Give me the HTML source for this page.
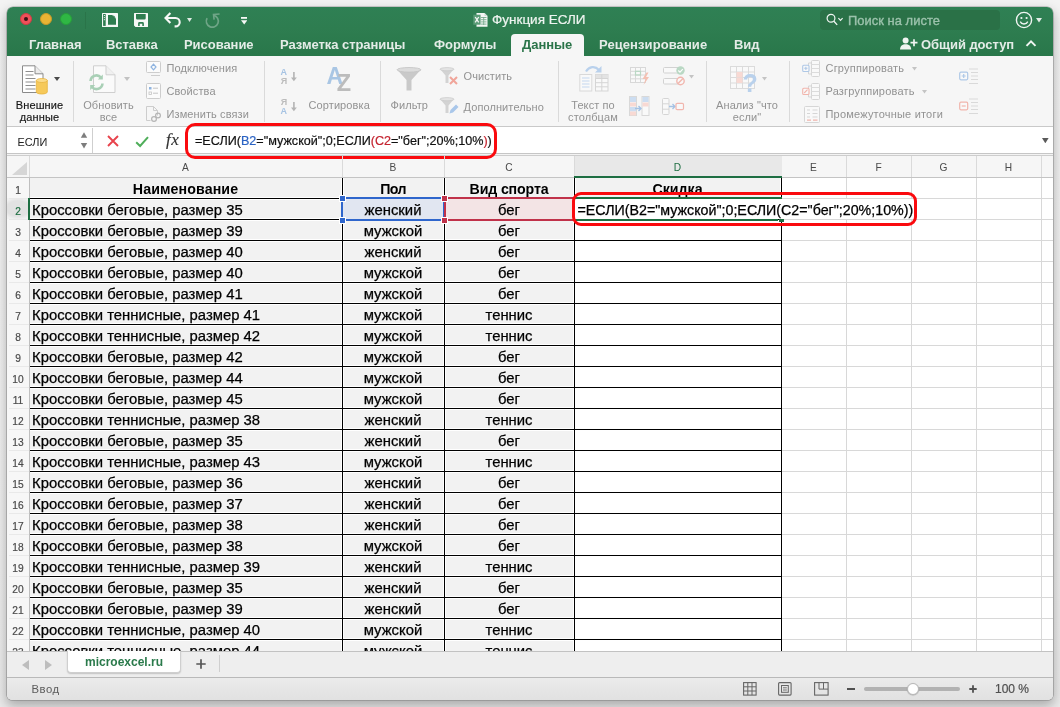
<!DOCTYPE html>
<html lang="ru"><head><meta charset="utf-8"><title>Функция ЕСЛИ</title>
<style>
*{box-sizing:border-box;margin:0;padding:0}
html,body{width:1060px;height:707px;overflow:hidden;background:linear-gradient(#f3f3f3,#f0f0f0 60%,#eaeaea);font-family:"Liberation Sans",sans-serif}
#win{position:absolute;left:7px;top:7px;width:1046px;height:693px;border-radius:6px 6px 5px 5px;background:#f1f1f1;box-shadow:0 5px 12px 1px rgba(0,0,0,.27),0 0 0 .6px rgba(0,0,0,.3);overflow:hidden}
#page{position:absolute;left:-7px;top:-7px;width:1060px;height:707px;will-change:transform}
#page div,#page svg,#page span.abs{position:absolute}
#green{left:7px;top:7px;width:1046px;height:49px;background:linear-gradient(#2f8054,#2e7d50 45%,#29774a)}
.tab{top:36.5px;height:16px;font-size:13px;font-weight:bold;color:#e4ece7;white-space:nowrap;line-height:16px;letter-spacing:-.05px}
#atab{left:511px;top:34px;width:73px;height:22px;background:#f6f6f6;border-radius:4px 4px 0 0}
#ribbon{left:7px;top:56px;width:1046px;height:71px;background:#f6f6f6;border-bottom:1px solid #c9c9c9}
.rl{font-size:11px;color:#929292;white-space:nowrap;line-height:13px;letter-spacing:.1px}
.rl.dk{color:#161616;-webkit-text-stroke:.15px #161616}
.rc{text-align:center}
.sep{width:1px;background:#dadada;top:60.5px;height:61px}
#fbar{left:7px;top:127px;width:1046px;height:27px;background:#fff;border-bottom:1px solid #c6c6c6}
#hdr{left:7px;top:154px;width:1046px;height:24px;background:#f6f6f6;border-top:1px solid #f3f3f3;border-bottom:1px solid #c4c4c4;box-shadow:inset 0 1px 0 #cdcdcd}
#sheet{left:7px;top:178px;width:1046px;height:473px;background:#fff}
.ch{top:160.5px;height:14px;font-size:10.2px;color:#4a4a4a;text-align:center;line-height:14px}
.rn{left:7px;width:22px;height:21px;font-size:10.2px;color:#4a4a4a;text-align:center;line-height:28px;-webkit-text-stroke:.2px #4a4a4a}
.rn.sel{color:#1e6e42;-webkit-text-stroke:.2px #1e6e42;background:radial-gradient(ellipse 16px 11px at 50% 50%,#e2e2e2 70%,#f1f1f1 100%)}
.c{height:21px;font-size:14.85px;line-height:24px;color:#000;white-space:nowrap;overflow:hidden;-webkit-text-stroke:.25px #000}
.c.h{font-weight:bold;text-align:center;font-size:14.2px;-webkit-text-stroke:0}
.c.a{padding-left:3px}
.c.m{text-align:center}
.fill{background:#f2f2f2}
.wv{background:#fff;width:3px;top:178px;height:473px}
.wh{background:#fff;height:3px;left:30px;width:752px}
.vl{background:#000;width:1px;top:178px;height:473px}
.hl{background:#000;height:1px;left:30px;width:752px}
.gv{background:#d8d8d8;width:1px;top:178px;height:473px}
.gh{background:#d8d8d8;height:1px;left:782px;width:271px}
  .rh{left:9px;width:20px;height:1px;background:#e9e9e9}
.cs{top:156px;width:1px;height:21px;background:#dadada}
.ch.sel{color:#1e6e42}
#tabsbar{left:7px;top:651px;width:1046px;height:26px;background:#eeeeee;border-top:1px solid #c2c2c2}
#status{left:7px;top:677px;width:1046px;height:23px;background:linear-gradient(#ebebeb,#e1e1e1);border-top:1px solid #b9b9b9}
</style></head><body>
<div id="win"><div id="page">
<div id="green"></div>
<div id="atab"></div>
<!-- title bar -->
<div style="left:20px;top:13px;width:12px;height:12px;border-radius:50%;background:#f0505a;border:.5px solid #d13c44"></div>
<div style="left:24px;top:17px;width:4px;height:4px;border-radius:50%;background:#3a1417"></div>
<div style="left:40px;top:13px;width:12px;height:12px;border-radius:50%;background:#e9b434;border:.5px solid #c99a28"></div>
<div style="left:60px;top:13px;width:12px;height:12px;border-radius:50%;background:#2fb744;border:.5px solid #27a03a"></div>
<div style="left:85px;top:12px;width:1px;height:17px;background:#2a7449"></div>
<svg style="left:102px;top:13px" width="16" height="14" viewBox="0 0 16 14"><rect x="0" y="0" width="16" height="14" rx=".6" fill="#f6f8f6"/><rect x="1.1" y="1" width="2.600" height="11.900" fill="#2f7d50"/><rect x="1.900" y="2" width="1" height="1" fill="#f6f8f6"/><rect x="1.900" y="4.100" width="1" height="1" fill="#f6f8f6"/><rect x="1.900" y="6.200" width="1" height="1" fill="#f6f8f6"/><path d="M6 2h4.200L14 5.800v6H6z" fill="#2f7d50"/><path d="M11.400 2.300l2.300 2.300h-2.300z" fill="#2f7d50"/></svg>
<svg style="left:134px;top:13px" width="14" height="14" viewBox="0 0 14 14"><path d="M.6 0h12.800a.6.600 0 0 1 .6.600v12.800a.6.600 0 0 1-.6.600H1.500L0 12.500V.6A.6.600 0 0 1 .6 0z" fill="#f6f8f6"/><path d="M2 1.100h9.700v4.200a1.200 1.200 0 0 1-1.200 1.200H3.200A1.200 1.200 0 0 1 2 5.300z" fill="#2f7d50"/><path d="M4.100 13v-2.600A1.400 1.400 0 0 1 5.500 9h3a1.400 1.400 0 0 1 1.400 1.400V13H8.300v-2.300H5.700V13z" fill="#2f7d50"/></svg>
<svg style="left:164px;top:12px" width="18" height="16" viewBox="0 0 18 16"><path d="M6.400 1L1.500 6l4.900 5" fill="none" stroke="#f6f8f6" stroke-width="2.100"/><path d="M1.800 6h9.700a4.200 4.200 0 0 1 0 8.400h-.9" fill="none" stroke="#f6f8f6" stroke-width="2.100"/></svg>
<svg style="left:187px;top:17.800px" width="5" height="4" viewBox="0 0 5 4"><path d="M0 0h5L2.500 3.900z" fill="#dfeae3"/></svg>
<svg style="left:204px;top:12px" width="17" height="17" viewBox="0 0 17 17"><path d="M3.100 6.200A6 6 0 1 0 9.850 3.400" fill="none" stroke="#6fa587" stroke-width="1.700"/><path d="M15.600 2L9.500 2.400l.6 5.300" fill="none" stroke="#6fa587" stroke-width="1.600"/></svg>
<svg style="left:240.800px;top:17px" width="6.400" height="7.600" viewBox="0 0 6.400 7.600"><rect x="0" y="0" width="6.400" height="1.800" fill="#f6f8f6"/><path d="M0 3.300h6.400L3.200 7.500z" fill="#f6f8f6"/></svg>
<!-- doc icon + title -->
<svg style="left:472.500px;top:13px" width="15" height="14" viewBox="0 0 15 14"><path d="M3.500 0h8l3 3v10.800h-11z" fill="#f3f6f4"/><path d="M11.500 0v3h3" fill="#cfdcd4"/><path d="M8 4.500h5.500M8 6.700h5.500M8 8.900h5.500M8 11.100h5.500M10.700 4v8" stroke="#79ad8f" stroke-width=".9"/><rect x=".3" y="1.700" width="7.300" height="10" fill="#5b9c77"/><path d="M2.200 4l3.500 5.400M5.700 4L2.200 9.400" stroke="#f3f6f4" stroke-width="1.300"/></svg>
<div style="left:492px;top:11px;height:18px;line-height:18px;font-size:13.5px;color:#eef4f0;white-space:nowrap;letter-spacing:0;-webkit-text-stroke:.2px #eef4f0">Функция ЕСЛИ</div>
<!-- search -->
<div style="left:820px;top:10px;width:180px;height:20px;border-radius:4px;background:#2a7147"></div>
<svg style="left:826px;top:13px" width="20" height="14" viewBox="0 0 20 14"><circle cx="5" cy="5.3" r="3.9" fill="none" stroke="#f0f5f2" stroke-width="1.200"/><path d="M7.900 8.300l3.300 3.600" stroke="#f0f5f2" stroke-width="1.400"/><path d="M12.4 5.2l2.1 2.1 2.1-2.1" fill="none" stroke="#f0f5f2" stroke-width="1.2"/></svg>
<div style="left:848px;top:12px;height:18px;line-height:18px;font-size:12.900px;color:#9cc2ac;white-space:nowrap;letter-spacing:.05px;-webkit-text-stroke:.35px #9cc2ac">Поиск на листе</div>
<svg style="left:1015px;top:11px" width="18" height="18" viewBox="0 0 18 18"><circle cx="9" cy="9" r="7.6" fill="none" stroke="#f0f5f2" stroke-width="1.4"/><circle cx="6.4" cy="7" r="1.1" fill="#f0f5f2"/><circle cx="11.6" cy="7" r="1.1" fill="#f0f5f2"/><path d="M5.2 10.6a4.2 4.2 0 0 0 7.6 0" fill="none" stroke="#f0f5f2" stroke-width="1.3"/></svg>
<svg style="left:1035.500px;top:17.500px" width="6" height="5" viewBox="0 0 6 5"><path d="M0 0h6L3 4.600z" fill="#e3ede7"/></svg>
<!-- tabs -->
<div class="tab" style="left:29px">Главная</div>
<div class="tab" style="left:106px">Вставка</div>
<div class="tab" style="left:184px">Рисование</div>
<div class="tab" style="left:280px">Разметка страницы</div>
<div class="tab" style="left:434px">Формулы</div>
<div class="tab" style="left:522px;color:#2a7449">Данные</div>
<div class="tab" style="left:599px;letter-spacing:.08px">Рецензирование</div>
<div class="tab" style="left:734px">Вид</div>
<svg style="left:900px;top:37px" width="18" height="14" viewBox="0 0 18 14"><circle cx="5.6" cy="3.6" r="3" fill="#f0f5f2"/><path d="M0 12.6c0-3.6 2.4-5.4 5.6-5.4s5.6 1.8 5.6 5.4z" fill="#f0f5f2"/><path d="M14 2.2v7M10.5 5.7h7" stroke="#f0f5f2" stroke-width="1.7"/></svg>
<div class="tab" style="left:921px">Общий доступ</div>
<svg style="left:1025px;top:39px" width="12" height="8" viewBox="0 0 12 8"><path d="M1.500 6.900l4.500-4.500 4.500 4.500" fill="none" stroke="#f0f5f2" stroke-width="2"/></svg>
<div id="ribbon"></div>
<!-- group 1: external data -->
<svg style="left:21px;top:65px" width="28" height="30" viewBox="0 0 28 30"><path d="M1.5.8h12.5l8 8v18.7H1.5z" fill="#fff" stroke="#8a8a8a" stroke-width="1"/><path d="M14 .8v8h8" fill="#ececec" stroke="#8a8a8a" stroke-width="1"/><path d="M4.5 6.5h8M4.5 10h8M4.5 13.5h10M4.5 17h10M4.5 20.500h10M4.500 24h10" stroke="#8f8f8f" stroke-width="1"/><path d="M15.300 15.500v11.500a5.500 2 0 0 0 11 0V15.500z" fill="#f6c95a" stroke="#e7b43f" stroke-width=".8"/><ellipse cx="20.800" cy="15.500" rx="5.500" ry="2" fill="#fbdc8c" stroke="#e7b43f" stroke-width=".8"/></svg>
<svg style="left:53.500px;top:77px" width="6" height="4" viewBox="0 0 6 4"><path d="M0 0h6L3 4z" fill="#4a4a4a"/></svg>
<div class="rl dk rc" style="left:10px;top:99px;width:59px">Внешние</div>
<div class="rl dk rc" style="left:10px;top:111px;width:59px">данные</div>
<div class="sep" style="left:73px"></div>
<!-- refresh all -->
<svg style="left:88px;top:65px" width="29" height="30" viewBox="0 0 29 30"><path d="M5.500.8h12.500l9 9v17.700H5.500z" fill="#fafafa" stroke="#cfcfcf" stroke-width="1"/><path d="M18 .8v9h9" fill="#f0f0f0" stroke="#cfcfcf" stroke-width="1"/><path d="M2.500 16a6 6 0 0 1 10.500-3.500" fill="none" stroke="#a9d0b6" stroke-width="2.600"/><path d="M14.800 9.500v5h-5z" fill="#a9d0b6"/><path d="M14.500 18.500a6 6 0 0 1-10.500 3.500" fill="none" stroke="#a9d0b6" stroke-width="2.600"/><path d="M2.200 25v-5h5z" fill="#a9d0b6"/></svg>
<svg style="left:123.500px;top:77px" width="6" height="4" viewBox="0 0 6 4"><path d="M0 0h6L3 4z" fill="#c2c2c2"/></svg>
<div class="rl rc" style="left:79px;top:99px;width:59px">Обновить</div>
<div class="rl rc" style="left:79px;top:111px;width:59px">все</div>
<!-- connections / properties / edit links -->
<svg style="left:146px;top:61px" width="15" height="16" viewBox="0 0 15 16"><rect x=".5" y=".5" width="14" height="11" rx="1" fill="#fbfbfb" stroke="#cdcdcd"/><path d="M7.500 3.200l2.500 2.800-2.500 2.800L5 6z" fill="none" stroke="#8fb4e0" stroke-width="1.200"/><path d="M5 14.500h9" stroke="#cdcdcd"/></svg>
<svg style="left:146px;top:83px" width="15" height="16" viewBox="0 0 15 16"><rect x=".5" y=".5" width="14" height="15" rx="1" fill="#fbfbfb" stroke="#cdcdcd"/><rect x="3" y="4" width="2.500" height="2.500" fill="#8fb4e0"/><path d="M7 5.200h5M7 10.200h5" stroke="#c4c4c4"/><rect x="3" y="9" width="2.500" height="2.500" fill="none" stroke="#c4c4c4" stroke-width=".8"/></svg>
<svg style="left:146px;top:106px" width="17" height="17" viewBox="0 0 17 17"><path d="M.500.500h7l4 4v5M.500.500v14h4" fill="none" stroke="#cdcdcd"/><path d="M7.500.500v4h4" fill="none" stroke="#cdcdcd"/><circle cx="8" cy="13" r="2.400" fill="none" stroke="#b5b5b5" stroke-width="1.200"/><circle cx="12" cy="9.500" r="2.400" fill="none" stroke="#b5b5b5" stroke-width="1.200"/></svg>
<div class="rl" style="left:166.5px;top:62px">Подключения</div>
<div class="rl" style="left:166.5px;top:85px">Свойства</div>
<div class="rl" style="left:166.5px;top:108px">Изменить связи</div>
<div class="sep" style="left:264px"></div>
<!-- sort -->
<svg style="left:280px;top:66px" width="18" height="20" viewBox="0 0 18 20"><text x=".5" y="9" font-size="9" font-weight="bold" font-family="Liberation Sans" fill="#a6c3e3">А</text><text x=".8" y="18.200" font-size="9" font-weight="bold" font-family="Liberation Sans" fill="#bcbcbc">Я</text><path d="M13.900 6v8" stroke="#b4b4b4" stroke-width="1.600"/><path d="M11 11.400h5.800l-2.900 3.800z" fill="#b4b4b4"/></svg>
<svg style="left:280px;top:96px" width="18" height="20" viewBox="0 0 18 20"><text x=".8" y="9" font-size="9" font-weight="bold" font-family="Liberation Sans" fill="#bcbcbc">Я</text><text x=".5" y="18.200" font-size="9" font-weight="bold" font-family="Liberation Sans" fill="#a6c3e3">А</text><path d="M13.900 6v8" stroke="#b4b4b4" stroke-width="1.600"/><path d="M11 11.400h5.800l-2.900 3.800z" fill="#b4b4b4"/></svg>
<svg style="left:325px;top:62px" width="30" height="32" viewBox="0 0 30 32"><text x="1.500" y="21.800" font-size="23" font-weight="bold" font-family="Liberation Sans" fill="#a9c6e4">А</text><text x="11.800" y="28.900" font-size="23.500" font-weight="bold" font-family="Liberation Sans" fill="#bcbcbc">Z</text></svg>
<div class="rl" style="left:308.5px;top:99px">Сортировка</div>
<div class="sep" style="left:380px"></div>
<!-- filter -->
<svg style="left:396px;top:67px" width="26" height="25" viewBox="0 0 26 25"><path d="M1 2.500h24L15.500 13v10.500h-5V13z" fill="#c9c9c9"/><ellipse cx="13" cy="2.800" rx="12" ry="2.300" fill="#dcdcdc" stroke="#c3c3c3" stroke-width=".8"/></svg>
<div class="rl" style="left:390.5px;top:99px">Фильтр</div>
<svg style="left:439px;top:67px" width="20" height="19" viewBox="0 0 20 19"><path d="M1 2h14l-5.500 6.500v7.500h-3V8.500z" fill="#d3d3d3"/><ellipse cx="8" cy="2.200" rx="7" ry="1.600" fill="#e3e3e3" stroke="#c9c9c9" stroke-width=".7"/><path d="M11 10l7 7M18 10l-7 7" stroke="#f0a59a" stroke-width="2"/></svg>
<div class="rl" style="left:463.5px;top:69.5px">Очистить</div>
<svg style="left:439px;top:97px" width="20" height="19" viewBox="0 0 20 19"><path d="M1 2h14l-5.500 6.500v7.500h-3V8.500z" fill="#d3d3d3"/><ellipse cx="8" cy="2.200" rx="7" ry="1.600" fill="#e3e3e3" stroke="#c9c9c9" stroke-width=".7"/><path d="M10.500 16.500l1-3.500 5.500-5.500 2.500 2.500-5.500 5.500z" fill="#a9c7ea"/></svg>
<div class="rl" style="left:463.5px;top:100.5px">Дополнительно</div>
<div class="sep" style="left:558px"></div>
<!-- text to columns -->
<svg style="opacity:.78;left:578.500px;top:65px" width="30" height="27" viewBox="0 0 30 27"><path d="M7 6.500c3-5 9-6 13-1.500" fill="none" stroke="#a9c7ea" stroke-width="2.200"/><path d="M22.500 1v6.500h-6.500z" fill="#a9c7ea"/><rect x=".8" y="9.500" width="12" height="16.500" fill="#fafafa" stroke="#d2d2d2"/><path d="M3 13h7.500M3 16h7.500M3 19h7.500M3 22h7.500" stroke="#b7d0ee" stroke-width="1"/><rect x="16.500" y="9.500" width="12.500" height="16.500" fill="#fafafa" stroke="#cdcdcd"/><rect x="16.500" y="9.500" width="12.500" height="4" fill="#dedede"/><path d="M22.800 9.500v16.500M16.500 13.500h12.500M16.500 17.700h12.500M16.500 21.800h12.500" stroke="#cdcdcd"/></svg>
<div class="rl rc" style="left:563px;top:99px;width:60px">Текст по</div>
<div class="rl rc" style="left:563px;top:111px;width:60px">столбцам</div>
<!-- flash fill -->
<svg style="opacity:.78;left:630px;top:67px" width="20" height="19" viewBox="0 0 20 19"><rect x=".5" y=".5" width="15" height="15" fill="#fafafa" stroke="#d0d0d0"/><path d="M5.500.500v15M10.500.500v15M.500 4.300h15M.500 8h15M.500 11.800h15" stroke="#d0d0d0"/><rect x="5.500" y="4.300" width="5" height="3.700" fill="none" stroke="#a9d0b6" stroke-width="1.200"/><path d="M16.500 5.500l-4 6.500h3l-2 6 5.500-8h-3l2.500-4.500z" fill="#f4b19f"/></svg>
<!-- data validation -->
<svg style="opacity:.78;left:663px;top:66px" width="23" height="20" viewBox="0 0 23 20"><rect x=".5" y="1.500" width="16" height="5.500" rx="1" fill="#fafafa" stroke="#c9c9c9"/><rect x=".5" y="12.500" width="16" height="5.500" rx="1" fill="#fafafa" stroke="#c9c9c9"/><circle cx="17.500" cy="4.500" r="4.200" fill="#a9d0b6"/><path d="M15.300 4.500l1.700 1.700 2.800-3" stroke="#fff" stroke-width="1.200" fill="none"/><circle cx="17.500" cy="15" r="3.700" fill="#fafafa" stroke="#f0a59a" stroke-width="1.400"/><path d="M15 17.500l5-5" stroke="#f0a59a" stroke-width="1.400"/></svg>
<svg style="left:689px;top:74.500px" width="5" height="4" viewBox="0 0 5 4"><path d="M0 0h5L2.500 3.600z" fill="#c4c4c4"/></svg>
<!-- remove duplicates -->
<svg style="opacity:.78;left:629px;top:96px" width="21" height="20" viewBox="0 0 21 20"><rect x=".5" y=".5" width="7" height="19" fill="#fafafa" stroke="#d0d0d0"/><rect x="13" y=".5" width="7" height="19" fill="#fafafa" stroke="#d0d0d0"/><rect x="1" y="1" width="6" height="5" fill="#c1d6f0"/><rect x="13.500" y="1" width="6" height="5" fill="#c1d6f0"/><rect x="1" y="11" width="6" height="4.500" fill="#c1d6f0"/><rect x="1" y="6.500" width="6" height="4" fill="#f9d2ca"/><rect x="1" y="15.500" width="6" height="4" fill="#f9d2ca"/><rect x="13.500" y="6.500" width="6" height="4" fill="#f9d2ca"/><path d="M6 12.500h5.500M9.500 10l2.500 2.500-2.500 2.500" fill="none" stroke="#8fb4e0" stroke-width="1.400"/></svg>
<!-- consolidate -->
<svg style="opacity:.78;left:662px;top:98px" width="23" height="17" viewBox="0 0 23 17"><rect x=".5" y=".5" width="6.500" height="16" rx="1" fill="#fafafa" stroke="#cdcdcd"/><path d="M.500 5.800h6.500M.500 11.200h6.500" stroke="#cdcdcd"/><path d="M7 8.500h5.500M10.500 6l2.500 2.500-2.500 2.500" fill="none" stroke="#8fb4e0" stroke-width="1.300"/><rect x="14" y="5.300" width="7.500" height="6.400" rx="1.200" fill="#fafafa" stroke="#f0a59a" stroke-width="1.200"/></svg>
<div class="sep" style="left:706px"></div>
<!-- what-if -->
<svg style="opacity:.78;left:730px;top:66px" width="30" height="27" viewBox="0 0 30 27"><rect x=".5" y=".5" width="24" height="22" fill="#fafafa" stroke="#d4d4d4"/><path d="M6.500.500v22M12.500.500v22M18.500.500v22M.500 6h24M.500 11.500h24M.500 17h24" stroke="#d4d4d4"/><rect x="6.500" y="6" width="6" height="5.500" fill="#f9d2ca"/><rect x="6.500" y="12" width="6" height="5" fill="#f9d2ca"/><text x="12.500" y="25.500" font-size="25" font-weight="bold" font-family="Liberation Sans" fill="#a9c7ea">?</text></svg>
<svg style="left:762px;top:76.500px" width="5" height="4" viewBox="0 0 5 4"><path d="M0 0h5L2.500 3.600z" fill="#c4c4c4"/></svg>
<div class="rl rc" style="left:712px;top:99px;width:70px">Анализ "что</div>
<div class="rl rc" style="left:712px;top:111px;width:70px">если"</div>
<div class="sep" style="left:789px"></div>
<!-- group / ungroup / subtotal -->
<svg style="opacity:.8;left:802px;top:60px" width="19" height="17" viewBox="0 0 19 17"><rect x="9.500" y=".5" width="8" height="16" rx="1" fill="#fafafa" stroke="#cfcfcf"/><path d="M9.500 4.500h8M9.500 8.500h8M9.500 12.500h8" stroke="#d6d6d6"/><path d="M9 3H6.500v11H9" fill="none" stroke="#cfcfcf"/><rect x=".7" y="5.200" width="6.300" height="6.300" rx="1" fill="#fafafa" stroke="#9dbde3" stroke-width="1.100"/><path d="M2.200 8.300h3.300M3.850 6.700v3.300" stroke="#9dbde3" stroke-width="1.100"/></svg>
<svg style="opacity:.8;left:802px;top:83px" width="19" height="17" viewBox="0 0 19 17"><rect x="9.500" y=".5" width="8" height="16" rx="1" fill="#fafafa" stroke="#cfcfcf"/><path d="M9.500 4.500h8M9.500 8.500h8M9.500 12.500h8" stroke="#d6d6d6"/><path d="M9 3H6.500v11H9" fill="none" stroke="#cfcfcf"/><rect x=".7" y="5.200" width="6.300" height="6.300" rx="1" fill="#fafafa" stroke="#f0a59a" stroke-width="1.100"/><path d="M2.200 10l3.300-3.300" stroke="#f0a59a" stroke-width="1.100"/></svg>
<svg style="opacity:.8;left:804px;top:106px" width="17" height="17" viewBox="0 0 17 17"><rect x=".5" y=".5" width="15" height="16" rx="1" fill="#fafafa" stroke="#cfcfcf"/><path d="M3 4h3M3 7.500h3M3 11h3M8.500 4h5M8.500 7.500h5M8.500 11h5" stroke="#cfcfcf"/><path d="M3 14.200h4M9 14.200h4.500" stroke="#f0a59a" stroke-width="1.300"/></svg>
<div class="rl" style="left:825.5px;top:62px;letter-spacing:.2px">Сгруппировать</div>
<svg style="left:911.500px;top:66.500px" width="5" height="4" viewBox="0 0 5 4"><path d="M0 0h5L2.500 3.600z" fill="#c4c4c4"/></svg>
<div class="rl" style="left:825.5px;top:85px;letter-spacing:.2px">Разгруппировать</div>
<svg style="left:922px;top:89.500px" width="5" height="4" viewBox="0 0 5 4"><path d="M0 0h5L2.500 3.600z" fill="#c4c4c4"/></svg>
<div class="rl" style="left:825.5px;top:108px;letter-spacing:.2px">Промежуточные итоги</div>
<svg style="opacity:.8;left:958.500px;top:68px" width="20" height="17" viewBox="0 0 20 17"><path d="M10 1h9M12 4.500h7M12 8h7M12 11.500h7M10 15.500h9" stroke="#d2d2d2" stroke-width="1"/><rect x=".7" y="4.200" width="8" height="7.600" rx="1.200" fill="#fafafa" stroke="#9dbde3" stroke-width="1.200"/><path d="M2.700 8h4M4.700 6v4" stroke="#9dbde3" stroke-width="1.200"/></svg>
<svg style="opacity:.8;left:958.500px;top:98px" width="20" height="17" viewBox="0 0 20 17"><path d="M10 1h9M12 4.500h7M12 8h7M12 11.500h7M10 15.500h9" stroke="#d2d2d2" stroke-width="1"/><rect x=".7" y="4.200" width="8" height="7.600" rx="1.200" fill="#fafafa" stroke="#f0a59a" stroke-width="1.200"/><path d="M2.700 8h4" stroke="#f0a59a" stroke-width="1.200"/></svg>

<div id="fbar"></div>
<div id="hdr"></div>
<svg style="left:11px;top:160.500px" width="17" height="15" viewBox="0 0 17 15"><path d="M16 1v13H1z" fill="#d6d6d6"/></svg>
<!-- formula bar -->
<div style="left:17.500px;top:133px;height:18px;line-height:18px;font-size:10.900px;color:#222;white-space:nowrap">ЕСЛИ</div>
<svg style="left:80px;top:132px" width="8" height="17" viewBox="0 0 8 17"><path d="M.8 5.700L4 .3l3.200 5.400z" fill="#7d7d7d"/><path d="M.8 11l3.200 5.400L7.200 11z" fill="#7d7d7d"/></svg>
<div style="left:92px;top:128px;width:1px;height:25px;background:#cfcfcf"></div>
<svg style="left:107px;top:135px" width="12" height="12" viewBox="0 0 12 12"><path d="M1 1l10 10M11 1L1 11" stroke="#e8434c" stroke-width="1.900" fill="none"/></svg>
<svg style="left:135px;top:135.500px" width="15" height="12" viewBox="0 0 15 12"><path d="M1.200 6.300l3.900 3.700L13 1.200" stroke="#4fae5a" stroke-width="2" fill="none"/></svg>
<div style="left:166px;top:130px;height:20px;line-height:20px;font-size:17px;font-style:italic;font-family:'Liberation Serif',serif;color:#333;white-space:nowrap;-webkit-text-stroke:.15px #333;letter-spacing:.6px">fx</div>
<div id="ftxt" style="left:195px;top:131px;height:20px;line-height:20px;font-size:12.600px;color:#111;white-space:nowrap;-webkit-text-stroke:.2px">=ЕСЛИ(<span style="color:#2b63c4">B2</span>="мужской";0;ЕСЛИ<span style="color:#c4232f">(</span><span style="color:#c4232f">C2</span>="бег";20%;10%<span style="color:#c4232f">)</span>)</div>
<svg style="left:1042.300px;top:138px" width="6.600" height="5.300" viewBox="0 0 6.600 5.300"><path d="M0 0h6.600L3.300 5.300z" fill="#5a5a5a"/></svg>
<div id="fred" style="left:184.800px;top:123.200px;width:312.500px;height:35.500px;border:3.400px solid #fa0a0e;border-radius:10px"></div>

<div id="sheet"></div>
<div style="left:7px;top:178px;width:22px;height:473px;background:#f7f7f7"></div>
<div id="grid">
<div class="fill" style="left:29px;top:178px;width:545px;height:473px"></div>
<div class="fill" style="left:574px;top:178px;width:207px;height:20px"></div>
<div class="wv" style="left:341px"></div>
<div class="wv" style="left:443px"></div>
<div class="wv" style="left:573px"></div>
<div class="wv" style="left:780px"></div>
<div class="wh" style="top:197px"></div>
<div class="wh" style="top:218px"></div>
<div class="wh" style="top:239px"></div>
<div class="wh" style="top:260px"></div>
<div class="wh" style="top:281px"></div>
<div class="wh" style="top:302px"></div>
<div class="wh" style="top:323px"></div>
<div class="wh" style="top:344px"></div>
<div class="wh" style="top:365px"></div>
<div class="wh" style="top:386px"></div>
<div class="wh" style="top:407px"></div>
<div class="wh" style="top:428px"></div>
<div class="wh" style="top:449px"></div>
<div class="wh" style="top:470px"></div>
<div class="wh" style="top:491px"></div>
<div class="wh" style="top:512px"></div>
<div class="wh" style="top:533px"></div>
<div class="wh" style="top:554px"></div>
<div class="wh" style="top:575px"></div>
<div class="wh" style="top:596px"></div>
<div class="wh" style="top:617px"></div>
<div class="wh" style="top:638px"></div>
<div class="rn" style="top:177px">1</div>
<div class="rn sel" style="top:198px">2</div>
<div class="rn" style="top:219px">3</div>
<div class="rn" style="top:240px">4</div>
<div class="rn" style="top:261px">5</div>
<div class="rn" style="top:282px">6</div>
<div class="rn" style="top:303px">7</div>
<div class="rn" style="top:324px">8</div>
<div class="rn" style="top:345px">9</div>
<div class="rn" style="top:366px">10</div>
<div class="rn" style="top:387px">11</div>
<div class="rn" style="top:408px">12</div>
<div class="rn" style="top:429px">13</div>
<div class="rn" style="top:450px">14</div>
<div class="rn" style="top:471px">15</div>
<div class="rn" style="top:492px">16</div>
<div class="rn" style="top:513px">17</div>
<div class="rn" style="top:534px">18</div>
<div class="rn" style="top:555px">19</div>
<div class="rn" style="top:576px">20</div>
<div class="rn" style="top:597px">21</div>
<div class="rn" style="top:618px">22</div>
<div class="rn" style="top:639px">23</div>
<div class="c h" style="left:29px;top:177px;width:313px;letter-spacing:.1px">Наименование</div>
<div class="c h" style="left:342px;top:177px;width:102px;letter-spacing:-.6px">Пол</div>
<div class="c h" style="left:444px;top:177px;width:130px;letter-spacing:-.15px">Вид спорта</div>
<div class="c h" style="left:574px;top:177px;width:207px">Скидка</div>
<div class="c a" style="left:29px;top:198px;width:313px">Кроссовки беговые, размер 35</div>
<div class="c m" style="left:342px;top:198px;width:102px">женский</div>
<div class="c m" style="left:444px;top:198px;width:130px">бег</div>
<div class="c a" style="left:29px;top:219px;width:313px">Кроссовки беговые, размер 39</div>
<div class="c m" style="left:342px;top:219px;width:102px">мужской</div>
<div class="c m" style="left:444px;top:219px;width:130px">бег</div>
<div class="c a" style="left:29px;top:240px;width:313px">Кроссовки беговые, размер 40</div>
<div class="c m" style="left:342px;top:240px;width:102px">женский</div>
<div class="c m" style="left:444px;top:240px;width:130px">бег</div>
<div class="c a" style="left:29px;top:261px;width:313px">Кроссовки беговые, размер 40</div>
<div class="c m" style="left:342px;top:261px;width:102px">мужской</div>
<div class="c m" style="left:444px;top:261px;width:130px">бег</div>
<div class="c a" style="left:29px;top:282px;width:313px">Кроссовки беговые, размер 41</div>
<div class="c m" style="left:342px;top:282px;width:102px">мужской</div>
<div class="c m" style="left:444px;top:282px;width:130px">бег</div>
<div class="c a" style="left:29px;top:303px;width:313px">Кроссовки теннисные, размер 41</div>
<div class="c m" style="left:342px;top:303px;width:102px">мужской</div>
<div class="c m" style="left:444px;top:303px;width:130px">теннис</div>
<div class="c a" style="left:29px;top:324px;width:313px">Кроссовки теннисные, размер 42</div>
<div class="c m" style="left:342px;top:324px;width:102px">мужской</div>
<div class="c m" style="left:444px;top:324px;width:130px">теннис</div>
<div class="c a" style="left:29px;top:345px;width:313px">Кроссовки беговые, размер 42</div>
<div class="c m" style="left:342px;top:345px;width:102px">мужской</div>
<div class="c m" style="left:444px;top:345px;width:130px">бег</div>
<div class="c a" style="left:29px;top:366px;width:313px">Кроссовки беговые, размер 44</div>
<div class="c m" style="left:342px;top:366px;width:102px">мужской</div>
<div class="c m" style="left:444px;top:366px;width:130px">бег</div>
<div class="c a" style="left:29px;top:387px;width:313px">Кроссовки беговые, размер 45</div>
<div class="c m" style="left:342px;top:387px;width:102px">мужской</div>
<div class="c m" style="left:444px;top:387px;width:130px">бег</div>
<div class="c a" style="left:29px;top:408px;width:313px">Кроссовки теннисные, размер 38</div>
<div class="c m" style="left:342px;top:408px;width:102px">женский</div>
<div class="c m" style="left:444px;top:408px;width:130px">теннис</div>
<div class="c a" style="left:29px;top:429px;width:313px">Кроссовки беговые, размер 35</div>
<div class="c m" style="left:342px;top:429px;width:102px">женский</div>
<div class="c m" style="left:444px;top:429px;width:130px">бег</div>
<div class="c a" style="left:29px;top:450px;width:313px">Кроссовки теннисные, размер 43</div>
<div class="c m" style="left:342px;top:450px;width:102px">мужской</div>
<div class="c m" style="left:444px;top:450px;width:130px">теннис</div>
<div class="c a" style="left:29px;top:471px;width:313px">Кроссовки беговые, размер 36</div>
<div class="c m" style="left:342px;top:471px;width:102px">женский</div>
<div class="c m" style="left:444px;top:471px;width:130px">бег</div>
<div class="c a" style="left:29px;top:492px;width:313px">Кроссовки беговые, размер 37</div>
<div class="c m" style="left:342px;top:492px;width:102px">женский</div>
<div class="c m" style="left:444px;top:492px;width:130px">бег</div>
<div class="c a" style="left:29px;top:513px;width:313px">Кроссовки беговые, размер 38</div>
<div class="c m" style="left:342px;top:513px;width:102px">женский</div>
<div class="c m" style="left:444px;top:513px;width:130px">бег</div>
<div class="c a" style="left:29px;top:534px;width:313px">Кроссовки беговые, размер 38</div>
<div class="c m" style="left:342px;top:534px;width:102px">мужской</div>
<div class="c m" style="left:444px;top:534px;width:130px">бег</div>
<div class="c a" style="left:29px;top:555px;width:313px">Кроссовки теннисные, размер 39</div>
<div class="c m" style="left:342px;top:555px;width:102px">женский</div>
<div class="c m" style="left:444px;top:555px;width:130px">теннис</div>
<div class="c a" style="left:29px;top:576px;width:313px">Кроссовки беговые, размер 35</div>
<div class="c m" style="left:342px;top:576px;width:102px">женский</div>
<div class="c m" style="left:444px;top:576px;width:130px">бег</div>
<div class="c a" style="left:29px;top:597px;width:313px">Кроссовки беговые, размер 39</div>
<div class="c m" style="left:342px;top:597px;width:102px">женский</div>
<div class="c m" style="left:444px;top:597px;width:130px">бег</div>
<div class="c a" style="left:29px;top:618px;width:313px">Кроссовки теннисные, размер 40</div>
<div class="c m" style="left:342px;top:618px;width:102px">мужской</div>
<div class="c m" style="left:444px;top:618px;width:130px">теннис</div>
<div class="c a" style="left:29px;top:639px;width:313px">Кроссовки теннисные, размер 44</div>
<div class="c m" style="left:342px;top:639px;width:102px">мужской</div>
<div class="c m" style="left:444px;top:639px;width:130px">теннис</div>
<div class="vl" style="left:29px;background:#bfbfbf"></div>
<div class="vl" style="left:342px"></div>
<div class="vl" style="left:444px"></div>
<div class="vl" style="left:574px"></div>
<div class="vl" style="left:781px"></div>
<div class="hl" style="top:198px"></div>
<div class="hl" style="top:219px"></div>
<div class="hl" style="top:240px"></div>
<div class="hl" style="top:261px"></div>
<div class="hl" style="top:282px"></div>
<div class="hl" style="top:303px"></div>
<div class="hl" style="top:324px"></div>
<div class="hl" style="top:345px"></div>
<div class="hl" style="top:366px"></div>
<div class="hl" style="top:387px"></div>
<div class="hl" style="top:408px"></div>
<div class="hl" style="top:429px"></div>
<div class="hl" style="top:450px"></div>
<div class="hl" style="top:471px"></div>
<div class="hl" style="top:492px"></div>
<div class="hl" style="top:513px"></div>
<div class="hl" style="top:534px"></div>
<div class="hl" style="top:555px"></div>
<div class="hl" style="top:576px"></div>
<div class="hl" style="top:597px"></div>
<div class="hl" style="top:618px"></div>
<div class="hl" style="top:639px"></div>
<div class="gv" style="left:846px"></div>
<div class="gv" style="left:911px"></div>
<div class="gv" style="left:976px"></div>
<div class="gv" style="left:1041px"></div>
<div class="gh" style="top:198px"></div>
<div class="gh" style="top:219px"></div>
<div class="gh" style="top:240px"></div>
<div class="gh" style="top:261px"></div>
<div class="gh" style="top:282px"></div>
<div class="gh" style="top:303px"></div>
<div class="gh" style="top:324px"></div>
<div class="gh" style="top:345px"></div>
<div class="gh" style="top:366px"></div>
<div class="gh" style="top:387px"></div>
<div class="gh" style="top:408px"></div>
<div class="gh" style="top:429px"></div>
<div class="gh" style="top:450px"></div>
<div class="gh" style="top:471px"></div>
<div class="gh" style="top:492px"></div>
<div class="gh" style="top:513px"></div>
<div class="gh" style="top:534px"></div>
<div class="gh" style="top:555px"></div>
<div class="gh" style="top:576px"></div>
<div class="gh" style="top:597px"></div>
<div class="gh" style="top:618px"></div>
<div class="gh" style="top:639px"></div>
<div class="rh" style="top:198px"></div>
<div class="rh" style="top:219px"></div>
<div class="rh" style="top:240px"></div>
<div class="rh" style="top:261px"></div>
<div class="rh" style="top:282px"></div>
<div class="rh" style="top:303px"></div>
<div class="rh" style="top:324px"></div>
<div class="rh" style="top:345px"></div>
<div class="rh" style="top:366px"></div>
<div class="rh" style="top:387px"></div>
<div class="rh" style="top:408px"></div>
<div class="rh" style="top:429px"></div>
<div class="rh" style="top:450px"></div>
<div class="rh" style="top:471px"></div>
<div class="rh" style="top:492px"></div>
<div class="rh" style="top:513px"></div>
<div class="rh" style="top:534px"></div>
<div class="rh" style="top:555px"></div>
<div class="rh" style="top:576px"></div>
<div class="rh" style="top:597px"></div>
<div class="rh" style="top:618px"></div>
<div class="rh" style="top:639px"></div>
<div class="ch" style="left:29px;width:313px">A</div>
<div class="ch" style="left:342px;width:102px">B</div>
<div class="ch" style="left:444px;width:130px">C</div>
<div class="ch sel" style="left:574px;width:207px">D</div>
<div class="ch" style="left:781px;width:65px">E</div>
<div class="ch" style="left:846px;width:65px">F</div>
<div class="ch" style="left:911px;width:65px">G</div>
<div class="ch" style="left:976px;width:65px">H</div>
<div class="cs" style="left:29px"></div>
<div class="cs" style="left:342px"></div>
<div class="cs" style="left:444px"></div>
<div class="cs" style="left:574px"></div>
<div class="cs" style="left:781px"></div>
<div class="cs" style="left:846px"></div>
<div class="cs" style="left:911px"></div>
<div class="cs" style="left:976px"></div>
<div class="cs" style="left:1041px"></div>
</div>
<!-- selection overlays -->
<div style="left:343px;top:199px;width:101px;height:20px;background:#e1e6f1"></div>
<div style="left:445px;top:199px;width:129px;height:20px;background:#f3e4e5"></div>
<div class="c m" style="left:342px;top:198px;width:102px">женский</div>
<div class="c m" style="left:444px;top:198px;width:130px">бег</div>
<div style="left:341px;top:197px;width:104px;height:24px;border:2px solid #2f66cc"></div>
<div style="left:444px;top:197px;width:132px;height:24px;border:2px solid #c0324a"></div>
<div style="left:339.200px;top:195.400px;width:6.400px;height:6.200px;background:#2f66cc;border:.5px solid #fff"></div>
<div style="left:339.200px;top:217.400px;width:6.400px;height:6.200px;background:#2f66cc;border:.5px solid #fff"></div>
<div style="left:441.200px;top:195.400px;width:6.400px;height:6.200px;background:#c0324a;border:.5px solid #fff"></div>
<div style="left:441.200px;top:217.400px;width:6.400px;height:6.200px;background:#c0324a;border:.5px solid #fff"></div>
<!-- D2 edit -->
<div style="left:575px;top:199px;width:340px;height:20px;background:#fff"></div>
<div style="left:573px;top:197px;width:209px;height:2px;background:#1e6e42"></div>
<div style="left:573px;top:219px;width:205px;height:2px;background:#1e6e42"></div>
<div style="left:573px;top:197px;width:2px;height:24px;background:#1e6e42"></div>
<div style="left:779px;top:219px;width:5px;height:3px;background:#1e6e42"></div>
<div id="dtxt" class="c" style="left:577.500px;top:198px;width:338px;font-size:14.250px">=ЕСЛИ(B2="мужской";0;ЕСЛИ(C2="бег";20%;10%))</div>
<div style="left:571.500px;top:192px;width:345.500px;height:34px;border:3.200px solid #fa0a0e;border-radius:9px"></div>
<!-- D header highlight -->
<div style="left:575px;top:156px;width:206.500px;height:20.500px;background:#e8e8e8"></div>
<div class="ch sel" style="left:574px;width:207px">D</div>
<div style="left:574px;top:176px;width:208px;height:2px;background:#1e6e42"></div>
<div style="left:28px;top:198px;width:2px;height:22px;background:#1e6e42"></div>
<div id="tabsbar"></div>
<div id="status"></div>
<!-- sheet tabs -->
<svg style="left:22px;top:660px" width="7" height="10" viewBox="0 0 7 10"><path d="M7 0v10L0 5z" fill="#bdbdbd"/></svg>
<svg style="left:45px;top:660px" width="7" height="10" viewBox="0 0 7 10"><path d="M0 0v10L7 5z" fill="#bdbdbd"/></svg>
<div style="left:67px;top:651px;width:114px;height:21.700px;background:#fff;border:1px solid #cfcfcf;border-top:none;border-radius:0 0 4px 4px;box-shadow:0 1px 1.5px rgba(0,0,0,.18)"></div>
<div style="left:67.500px;top:654px;width:113px;height:16px;line-height:16px;text-align:center;font-size:12px;font-weight:bold;color:#2a7a4b;white-space:nowrap">microexcel.ru</div>
<svg style="left:195.500px;top:659px" width="10" height="10" viewBox="0 0 10 10"><path d="M5 .3v9.400M.3 5h9.400" stroke="#555" stroke-width="1.700"/></svg>
<div style="left:218.500px;top:655px;width:1px;height:17px;background:#cfcfcf"></div>
<!-- status -->
<div style="left:31.500px;top:680.500px;height:16px;line-height:16px;font-size:11.300px;color:#5c5c5c;white-space:nowrap;letter-spacing:.55px">Ввод</div>
<svg style="left:743px;top:682px" width="14" height="14" viewBox="0 0 14 14"><rect x=".6" y=".6" width="12.500" height="12.500" fill="none" stroke="#666" stroke-width="1.100"/><path d="M4.800.600v12.500M9 .600v12.500M.600 4.800h12.500M.600 9h12.500" stroke="#666" stroke-width="1"/></svg>
<svg style="left:778px;top:682px" width="14" height="14" viewBox="0 0 14 14"><rect x=".6" y=".6" width="12.500" height="12.500" rx="1" fill="none" stroke="#666" stroke-width="1.100"/><rect x="3.500" y="3.500" width="6.800" height="6.800" fill="none" stroke="#666" stroke-width="1"/><path d="M5 5.800h3.800M5 8h3.800" stroke="#666" stroke-width=".9"/></svg>
<svg style="left:814px;top:682px" width="15" height="14" viewBox="0 0 15 14"><rect x=".6" y=".6" width="13.500" height="12.500" fill="none" stroke="#666" stroke-width="1.100"/><path d="M5 .600v6.500h9M9.500.600v6.500" stroke="#666" stroke-width="1" fill="none"/></svg>
<div style="left:846.500px;top:688px;width:8px;height:2px;background:#505050"></div>
<div style="left:863.500px;top:687px;width:96.500px;height:4px;border-radius:2px;background:#b2b2b2"></div>
<div style="left:906.500px;top:682.500px;width:12px;height:12px;border-radius:50%;background:#fff;border:1px solid #b8b8b8;box-shadow:0 .5px 1px rgba(0,0,0,.25)"></div>
<svg style="left:969px;top:685px" width="8" height="8" viewBox="0 0 8 8"><path d="M4 .300v7.400M.300 4h7.400" stroke="#505050" stroke-width="1.800"/></svg>
<div style="left:995px;top:681px;height:16px;line-height:16px;font-size:12px;color:#505050;white-space:nowrap;-webkit-text-stroke:.2px #505050">100 %</div>

</div></div>
</body></html>
